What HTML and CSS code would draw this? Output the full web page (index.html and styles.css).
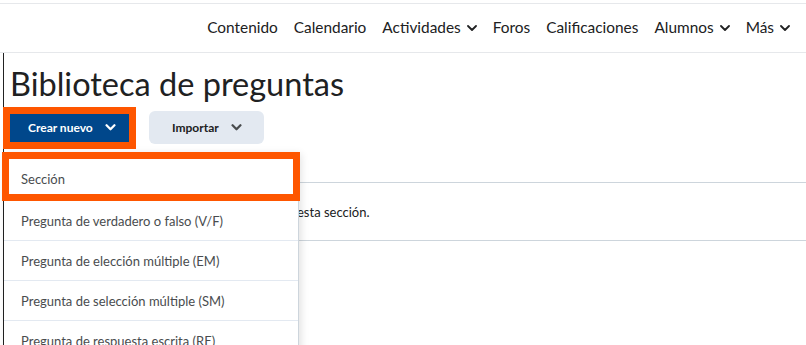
FILE: index.html
```html
<!DOCTYPE html>
<html lang="es">
<head>
  <meta charset="UTF-8" />
  <title>Biblioteca de preguntas</title>
  <link rel="stylesheet" href="styles.css">
</head>
<body>

  <header class="topbar">
    <nav class="nav">
      <a href="#">Contenido</a>
      <a href="#">Calendario</a>
      <a href="#">Actividades <svg class="chev" viewBox="0 0 10 6"><path d="M1 1l4 4 4-4" /></svg></a>
      <a href="#">Foros</a>
      <a href="#">Calificaciones</a>
      <a href="#">Alumnos <svg class="chev" viewBox="0 0 10 6"><path d="M1 1l4 4 4-4" /></svg></a>
      <a href="#">Más <svg class="chev" viewBox="0 0 10 6"><path d="M1 1l4 4 4-4" /></svg></a>
    </nav>
  </header>

  <main class="page">
    <h1>Biblioteca de preguntas</h1>

    <div class="acciones">
      <button class="btn primario marcado">Crear nuevo <svg class="chev-btn" viewBox="0 0 12 8"><path d="M1.5 1.5l4.5 4.5 4.5-4.5" /></svg></button>
      <button class="btn secundario">Importar <svg class="chev-btn" viewBox="0 0 12 8"><path d="M1.5 1.5l4.5 4.5 4.5-4.5" /></svg></button>
    </div>

    <div class="lista">
      <div class="fila vacia">No hay preguntas en esta sección.</div>
    </div>

    <!-- menu desplegable de "Crear nuevo" -->
    <ul class="menu">
      <li>Sección</li>
      <li>Pregunta de verdadero o falso (V/F)</li>
      <li>Pregunta de elección múltiple (EM)</li>
      <li>Pregunta de selección múltiple (SM)</li>
      <li>Pregunta de respuesta escrita (RE)</li>
    </ul>
    <div class="resalte"></div>
  </main>

</body>
</html>
```

FILE: styles.css
```css
body {
  margin: 0;
  font-family: Lato, "Noto Sans", sans-serif;
  color: #202122;
  background: white;
  overflow: hidden;
}

.topbar {
  margin-top: 3px;
  border-top: 1px solid #e6e8eb;
  border-bottom: 1px solid #e6e8eb;
  height: 48px;
}

.nav {
  display: flex;
  justify-content: flex-end;
  align-items: center;
  gap: 16px;
  height: 45px;
  padding-right: 16px;
}

.nav a {
  color: #202122;
  text-decoration: none;
  font-size: 15.4px;
  display: flex;
  align-items: center;
  gap: 6px;
}

.chev {
  width: 10px;
  height: 6px;
  margin-top: 2px;
  fill: none;
  stroke: #202122;
  stroke-width: 1.8;
  stroke-linecap: round;
  stroke-linejoin: round;
}

.page {
  position: relative;
  border-left: 1px solid #222;
  margin-left: 3px;
  padding-left: 6px;
  height: 292px;
}

h1 {
  font-size: 32.5px;
  font-weight: 400;
  margin: 0;
  padding-top: 11px;
  line-height: 40px;
}

.acciones {
  display: flex;
  align-items: center;
  gap: 20px;
  margin-top: 7px;
}

.btn {
  font-family: Lato, "Noto Sans", sans-serif;
  font-size: 12px;
  font-weight: 700;
  border: none;
  display: flex;
  align-items: center;
  gap: 12px;
  cursor: pointer;
}

.primario {
  background: #00478b;
  color: white;
  height: 28px;
  width: 119px;
  padding: 0 0 0 18px;
  border-radius: 0;
}

.primario .chev-btn {
  stroke: white;
}

.marcado {
  outline: 7px solid #fe5600;
}

.secundario {
  background: #e3e9f1;
  color: #202122;
  height: 33px;
  width: 115px;
  padding: 0 0 0 23px;
  border-radius: 6px;
}

.chev-btn {
  width: 11px;
  height: 7px;
  fill: none;
  stroke: #494c4e;
  stroke-width: 2.6;
  stroke-linecap: round;
  stroke-linejoin: round;
}

.lista {
  margin-top: 38px;
  border-top: 1px solid #cdd5dc;
  border-bottom: 1px solid #cdd5dc;
  margin-left: -6px;
}

.fila {
  height: 57px;
  display: flex;
  align-items: center;
  font-size: 13px;
  color: #202122;
  padding-left: 172px;
}

.menu {
  position: absolute;
  left: 0;
  top: 99px;
  width: 294px;
  margin: 0;
  padding: 0;
  list-style: none;
  background: white;
  border: 1px solid #cdd5dc;
  border-left: none;
  box-shadow: 2px 2px 8px rgba(0, 0, 0, 0.12);
}

.menu li {
  box-sizing: border-box;
  height: 40px;
  border-bottom: 1px solid #e3e9f1;
  display: flex;
  align-items: center;
  padding-left: 17px;
  font-size: 13px;
  color: #494c4e;
}

.menu li:first-child {
  height: 48px;
  padding-top: 5px;
}

.resalte {
  position: absolute;
  left: -2px;
  top: 99px;
  width: 284px;
  height: 35px;
  border: 7px solid #fe5600;
}
```
